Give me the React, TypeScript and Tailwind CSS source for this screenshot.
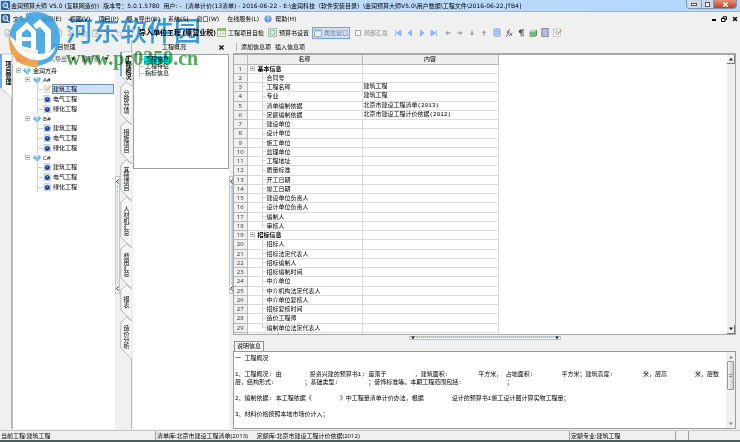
import React from 'react';
import {
  FilePlus, FolderOpen, Save, FilePen, Scissors, Copy, ClipboardPaste, Undo2, Redo2, X,
} from 'lucide-react';

const menus = ['文件(F)', '编辑(E)', '视图(V)', '项目(P)', '导入导出(D)', '系统(S)', '窗口(W)', '在线服务(L)'];

const sections = [
  {
    name: '基本信息',
    rows: [
      ['合同号', ''], ['工程名称', '建筑工程'], ['专业', '建筑工程'],
      ['清单编制依据', '北京市建设工程清单(2013)'], ['定额编制依据', '北京市建设工程计价依据(2012)'],
      ['建设单位', ''], ['设计单位', ''], ['施工单位', ''], ['监理单位', ''], ['工程地址', ''], ['质量标准', ''],
      ['开工日期', ''], ['竣工日期', ''], ['建设单位负责人', ''], ['设计单位负责人', ''], ['编制人', ''], ['审核人', ''],
    ],
  },
  {
    name: '招标信息',
    rows: [
      ['招标人', ''], ['招标法定代表人', ''], ['招标编制人', ''], ['招标编制时间', ''], ['中介单位', ''],
      ['中介机构法定代表人', ''], ['中介单位复核人', ''], ['招标复核时间', ''], ['造价工程师', ''],
      ['编制单位法定代表人', ''],
    ],
  },
  { name: '投标信息', rows: [] },
];

type Row = { name: string; value: string; head: boolean; last: boolean };
const rows: Row[] = sections.flatMap((s) => [
  { name: s.name, value: '', head: true, last: false },
  ...s.rows.map(([name, value], i) => ({ name, value, head: false, last: i === s.rows.length - 1 })),
]);

const tabs = [
  { name: '分部分项', height: 'h-[39px]', edge: 33 },
  { name: '措施项目', height: 'h-[39px]', edge: 33 },
  { name: '其他项目', height: 'h-[37px]', edge: 31 },
  { name: '人材机汇总', height: 'h-[47px]', edge: 41 },
  { name: '费用汇总', height: 'h-[41px]', edge: 35 },
  { name: '报表', height: 'h-[32px]', edge: 26 },
  { name: '造价分析', height: 'h-[38px]', edge: 32 },
];

function AppIcon() {
  return (
    <svg viewBox="0 0 10 10" className="size-[9px] shrink-0">
      <rect width="10" height="10" rx="1" fill="#2a5ea3" />
      <circle cx="4.800" cy="4.600" r="2.600" stroke="#dcecff" strokeWidth="1.200" fill="none" />
      <path d="M6.500 6.500 8.800 9" stroke="#dcecff" strokeWidth="1.300" />
      <path d="M4 5.800V3.800h1.600v2" stroke="#9cc4ee" strokeWidth=".8" fill="none" />
    </svg>
  );
}

function Gem() {
  return (
    <svg viewBox="0 0 8 8" className="size-[8px] shrink-0">
      <path d="M1.500 1.500 5.500 .5 8 3 4.500 7.800 0 3.800z" fill="#5fb0ea" />
      <path d="M1.500 1.500 5.500 .5 6 2.600 2.600 3.600z" fill="#c7ecff" />
      <path d="M2.600 3.600 6 2.600 4.500 7.800z" fill="#8acdf6" />
    </svg>
  );
}

function DocIcon({ editing }: { editing: boolean }) {
  return editing ? (
    <svg viewBox="0 0 8 8" className="size-[8px] shrink-0">
      <path d="M1 1h5.500v6.500H1z" fill="#f3f3f0" stroke="#b9b9b4" strokeWidth=".5" />
      <path d="M3 5.500 7.300 1l.6.6L3.700 6z" fill="#e6a03c" />
      <path d="M2 3h2.500M2 4.500h1.500" stroke="#999" strokeWidth=".5" />
    </svg>
  ) : (
    <svg viewBox="0 0 8 8" className="size-[8px] shrink-0">
      <path d="M1 .3h5l1.500 1.500v6H1z" fill="#dfe6ee" stroke="#9aa7b5" strokeWidth=".5" />
      <circle cx="4.300" cy="4.400" r="2.500" fill="#1b3f9c" />
      <path d="M3 3.500 4.500 3l.6 1-1 .8z" fill="#7fb5f2" />
    </svg>
  );
}

function Minus() {
  return (
    <svg viewBox="0 0 5 5" className="size-[5px] shrink-0">
      <rect x=".5" y=".5" width="4" height="4" fill="#fff" stroke="#c5c5c5" />
      <path d="M1.500 2.500h2" stroke="#555" />
    </svg>
  );
}

function Caret({ dir }: { dir: 'up' | 'down' }) {
  return (
    <svg viewBox="0 0 6 4" className="h-[4px] w-[6px]">
      <path d={dir === 'up' ? 'M1 3.500 3 .8l2 2.700z' : 'M1 .5 3 3.200 5 .5z'} fill="#222" />
    </svg>
  );
}

function NavIcon({ kind }: { kind: 'first' | 'prev' | 'next' | 'last' }) {
  const d = {
    first: 'M1.500 1v6M7 1v6L2.500 4z',
    prev: 'M5.500 1v6L2 4z',
    next: 'M2.500 1v6L6 4z',
    last: 'M6.500 1v6M1 1v6l4.500-3z',
  }[kind];
  return (
    <svg viewBox="0 0 8 8" className="size-[8px]">
      <path d={d} fill="#8fb6f0" stroke="#8fb6f0" strokeWidth=".9" />
    </svg>
  );
}

function SmallArrow({ turn }: { turn: number }) {
  return (
    <svg viewBox="0 0 8 8" className="size-[8px]">
      <path transform={`rotate(${turn} 4 4)`} d="M1.300 4 4 1.800v1.500h2.500v1.400H4v1.500z" fill="#a3a3a3" />
    </svg>
  );
}

function SideCaret() {
  return (
    <svg viewBox="0 0 3 5" className="h-[5px] w-[3px]">
      <path d="M2.600 .5.6 2.500l2 2" stroke="#222" fill="none" />
    </svg>
  );
}

function CollapseBar() {
  return (
    <div className="mt-[121px] flex h-[118px] flex-col items-center justify-between border border-[#c4c4c4] bg-[#f4f4f4] py-[2px]">
      <SideCaret />
      <span className="my-[2px] flex-1 border-l border-dotted border-[#8fb6e6]" />
      <SideCaret />
    </div>
  );
}

function Branch({ name }: { name: string }) {
  const jobs = ['建筑工程', '电气工程', '绿化工程'];
  return (
    <li>
      <div className="flex h-[9px] items-center gap-[2px] pl-[12px]">
        <Minus />
        <span className="ml-px flex items-center gap-[2px]"><Gem />{name}</span>
      </div>
      <ul className="ml-[24px] border-l border-[#d0d0d0]">
        {jobs.map((job, i) => {
          const on = name === 'A#' && i === 0;
          return (
            <li key={job} className="flex h-[10px] items-center">
              <span className="w-[5px] border-t border-[#d0d0d0]" />
              <DocIcon editing={on} />
              <button
                className={
                  on
                    ? 'ml-px h-[10px] flex-1 border border-[#6d8fb8] bg-[#cfe0f7] text-left leading-[8px]'
                    : 'ml-[2px] h-[10px] text-left leading-[10px]'
                }
              >
                {job}
              </button>
            </li>
          );
        })}
      </ul>
    </li>
  );
}

function Gap({ wide = false }: { wide?: boolean }) {
  return <span className={wide ? 'inline-block w-[30px]' : 'inline-block w-[28px]'} />;
}

function Watermark() {
  return (
    <div className="pointer-events-none absolute top-[10px] left-[8px] flex gap-[5px]">
      <svg viewBox="0 0 53 58" className="h-[58px] w-[53px]" opacity=".88">
        <path d="M1 26C4 10 15 2 28 2c15 0 24 12 24 26 0 15-9 26-22 28V40L14 36 2 26z" fill="#3aa3e5" />
        <path d="M1 24c3 9 8 15 19 18v14C8 54-1 42 1 24z" fill="#f29a3c" />
        <path d="M20 44h10v13c-4 0-7 0-10-1z" fill="#f29a3c" />
        <path d="M1 24c5 12 14 19 29 20 8 0 14-3 18-8-4 12-12 15-20 14C14 49 4 38 1 24z" fill="#fff" />
        <path d="M8 22 19 12l9 9v20h-5V23l-4-4-5 4v15l-6-6z" fill="#fff" />
        <path d="M25 15 32 9l11 11v20l-6 4V23l-5-6-4 2z" fill="#fff" />
        <path d="M12 27h13v4H12z" fill="#fff" />
        <circle cx="16" cy="6" r="2" fill="#fff" />
      </svg>
      <div className="flex flex-col pt-px mix-blend-multiply">
        <span className="font-['Noto_Sans_CJK_SC',sans-serif] text-[27px] leading-[37px] font-medium text-[#3ba3ea]">河东软件园</span>
        <span className="font-['Liberation_Serif',serif] text-[20px] leading-[20px] font-bold text-[#4fae56]">www.pc0359.cn</span>
      </div>
    </div>
  );
}

export default function App() {
  return (
    <div className="relative flex h-screen w-full flex-col overflow-hidden bg-[#f0f0f0] font-['Open_Sans','Noto_Sans_CJK_SC',sans-serif] text-[6px] leading-[8px] whitespace-nowrap text-black">
      <header className="flex h-[12px] shrink-0 items-center border-b border-[#9db4cc] bg-linear-to-r from-[#c6dbf1] to-[#b2d8fd] pl-px font-['DejaVu_Sans','Noto_Sans_CJK_SC',sans-serif]">
        <AppIcon />
        <h1 className="ml-px flex flex-1 gap-[4px]">
          <span>金润预算大师 V5.0 (互联网造价)</span>
          <span>版本号：5.0.1.5780</span>
          <span>用户: -</span>
          <span>[清单计价(13清单) - 2016-06-22 - E:\金润科技（软件安装目录）\金润预算大师V5.0\用户数据\工程文件\2016-06-22.JTB4]</span>
        </h1>
        <div className="mr-[3px] flex h-[9px] self-start overflow-hidden rounded-b-sm border border-t-0 border-[#7f93a8]">
          <button aria-label="最小化" className="flex w-[15px] items-center justify-center border-r border-[#8b9db0] bg-[#c9d9ea]">
            <span className="h-[3px] w-[6px] border border-[#555] bg-white" />
          </button>
          <button aria-label="还原" className="flex w-[12px] items-center justify-center border-r border-[#8b9db0] bg-[#c9d9ea]">
            <span className="size-[5px] border border-[#555] bg-white" />
          </button>
          <button aria-label="关闭" className="flex w-[22px] items-center justify-center bg-linear-to-b from-[#e2907c] to-[#c43c20] text-white">
            <X className="size-[7px]" strokeWidth={5} />
          </button>
        </div>
      </header>

      <nav className="flex h-[13px] shrink-0 items-center gap-[8px] pr-[2px] pl-px font-['DejaVu_Sans','Noto_Sans_CJK_SC',sans-serif]">
        <span className="-mr-[5px]"><AppIcon /></span>
        {menus.map((m) => <button key={m}>{m}</button>)}
        <button className="-ml-[3px] flex items-center gap-[3px]">
          <svg viewBox="0 0 8 8" className="size-[8px]">
            <circle cx="4" cy="4" r="3.600" fill="#5b9be6" />
            <path d="M2.800 3.200c0-2 2.600-1.800 2.400-.2C5.100 4 4 4 4 5M4 5.600v.8" stroke="#fff" strokeWidth=".8" fill="none" />
          </svg>
          帮助(H)
        </button>
        <span className="flex-1" />
        <button aria-label="最小化文档" className="mt-[3px] h-[2px] w-[4px] bg-black" />
        <button aria-label="还原文档" className="-mx-[3px]">
          <svg viewBox="0 0 6 6" className="size-[6px]"><path d="M2 2V.8h3.500v2.700H4M.5 2.500H4v3H.5z" fill="none" stroke="#000" /></svg>
        </button>
        <button aria-label="关闭文档"><X className="size-[6px]" strokeWidth={6} /></button>
      </nav>

      <div className="flex h-[15px] shrink-0 items-center">
        <div className="flex w-[139px] shrink-0 items-center gap-[4px] pl-[4px] text-[#9aa8ba]">
          <button aria-label="新建"><FilePlus className="size-[8px]" /></button>
          <span className="w-[8px]" />
          <button aria-label="打开" className="text-[#55a06a]"><FolderOpen className="size-[9px]" /></button>
          <button aria-label="保存" className="text-[#9a9ede]"><Save className="size-[9px]" /></button>
          <button aria-label="编辑" className="text-[#d9aa6a]"><FilePen className="size-[9px]" /></button>
          <button aria-label="剪切"><Scissors className="size-[8px]" /></button>
          <button aria-label="复制"><Copy className="size-[8px]" /></button>
          <button aria-label="粘贴"><ClipboardPaste className="size-[8px]" /></button>
          <button aria-label="删除"><X className="size-[8px]" /></button>
          <button aria-label="撤销"><Undo2 className="size-[8px]" /></button>
          <button aria-label="重做"><Redo2 className="size-[8px]" /></button>
        </div>
        <button className="w-[78px] text-left text-[7px] font-bold">导入单位工程 (原营业税)</button>
        <button className="flex w-[51px] items-center gap-[2px]">
          <svg viewBox="0 0 9 9" className="size-[9px]">
            <path d="M.5.5h8v8h-8z" fill="#fff" stroke="#9ab88e" />
            <path d="M0 0h9v3H0z" fill="#8cc46a" /><path d="M.5 5.500h8M3.500 3v6M6 3v6" stroke="#b2cda8" strokeWidth=".7" />
          </svg>
          工程项目自检
        </button>
        <button className="flex w-[44px] items-center gap-[2px]">
          <svg viewBox="0 0 9 9" className="size-[9px]">
            <rect x=".5" y=".5" width="8" height="8" fill="#d8eedb" stroke="#9fc4a6" />
            <circle cx="4.500" cy="4.500" r="2.400" fill="#f4faff" stroke="#78b98a" />
          </svg>
          预算书设置
        </button>
        <button className="flex h-[12px] w-[38px] items-center gap-[2px] border border-[#6ba6e8] bg-[#cde0f5] pl-px text-[#7a8288]">
          <svg viewBox="0 0 8 8" className="size-[8px]">
            <path d="M.5 1h7v6.500h-7z" fill="#e9eef4" stroke="#9aa8b6" /><path d="M0 .5h8v2H0z" fill="#a9b7c6" />
          </svg>
          属性窗口
        </button>
        <label className="ml-[5px] flex items-center gap-[3px] text-[#8a8a8a]">
          <input type="checkbox" className="size-[6px] appearance-none border border-[#aaa] bg-[#f8f8f8]" />
          局部汇总
        </label>
        <div className="ml-[6px] flex items-center gap-[4px]">
          <button aria-label="首条"><NavIcon kind="first" /></button>
          <button aria-label="上一条"><NavIcon kind="prev" /></button>
          <button aria-label="下一条"><NavIcon kind="next" /></button>
          <button aria-label="末条"><NavIcon kind="last" /></button>
          <button aria-label="左移" className="ml-[2px]"><SmallArrow turn={0} /></button>
          <button aria-label="右移"><SmallArrow turn={180} /></button>
          <button aria-label="下移"><SmallArrow turn={270} /></button>
          <button aria-label="上移"><SmallArrow turn={90} /></button>
          <button aria-label="数据库" className="ml-px">
            <svg viewBox="0 0 8 9" className="h-[9px] w-[8px]">
              <rect x=".8" y=".5" width="6.400" height="8" rx="1.500" fill="#b4ccf2" stroke="#8ba8da" strokeWidth=".7" />
              <path d="M1 3.200h6M1 5.800h6" stroke="#8ba8da" strokeWidth=".6" />
            </svg>
          </button>
          <button aria-label="函数">
            <svg viewBox="0 0 8 8" className="size-[8px]">
              <path d="M5 .8C3.400.5 3.300 2 3 4c-.3 2-.5 3.400-2 3.200M1.800 3h2.800M4.500 4l2.500 3M7.300 4 4 7" fill="none" stroke="#555" strokeWidth=".9" />
            </svg>
          </button>
          <button aria-label="段落">
            <svg viewBox="0 0 8 8" className="size-[8px]">
              <path d="M4 .8h3M4.200 1v6.500M6 1v6.500" stroke="#444" strokeWidth=".8" /><path d="M4.200.5C1 .5 1 4.300 4.200 4.300z" fill="#444" />
            </svg>
          </button>
          <button aria-label="图集">
            <svg viewBox="0 0 8 8" className="size-[8px]">
              <path d="M2 .5h6L6.500 2.500H.5z" fill="#b5e0b6" /><path d="M.5 2.500h6V8h-6z" fill="#74b87a" /><path d="M6.500 2.500 8 .5V6L6.500 8z" fill="#4e8a56" />
            </svg>
          </button>
          <button aria-label="列设置">
            <svg viewBox="0 0 8 9" className="h-[9px] w-[8px]">
              <rect x=".8" y=".5" width="6.400" height="8" fill="#aaaed8" stroke="#7b7f92" strokeWidth=".8" /><path d="M3 1v7M5 1v7" stroke="#d7d9f0" strokeWidth=".7" />
            </svg>
          </button>
          <button aria-label="备注">
            <svg viewBox="0 0 9 9" className="size-[9px]">
              <rect x=".5" y="1" width="7" height="7.500" fill="#fafafa" stroke="#b3b9c0" strokeWidth=".7" />
              <path d="M2 3h3M2 5h2" stroke="#6d8fc0" strokeWidth=".7" /><path d="m3.500 6.500 4.500-5 .8.8-4.300 4.700z" fill="#d58b3a" />
            </svg>
          </button>
        </div>
      </div>

      <main className="flex min-h-0 flex-1 pr-[2px]">
        <div className="w-[12px] shrink-0 border-r border-[#b8b8b8] pt-[14px]">
          <button className="relative flex h-[34px] w-[12px] items-start justify-center pt-[3px] font-bold [writing-mode:vertical-rl]">
            <svg viewBox="0 0 12 46" className="absolute top-0 left-0 h-[46px] w-[12px] overflow-visible">
              <path d="M1 0h11v45L1 34z" fill="#fff" stroke="#b0b0b0" strokeWidth=".7" />
              <path d="M1 0v34" stroke="#4f97e0" strokeWidth="1.500" />
            </svg>
            <span className="relative leading-[9px]">项目管理</span>
          </button>
        </div>

        <section className="flex w-[103px] shrink-0 flex-col">
          <h2 className="h-[14px] text-center leading-[14px]">项目管理</h2>
          <div className="flex h-[10px] shrink-0 items-center gap-[6px] pl-[4px] text-[#555]">
            {['新建', '导入导出', '展开到'].map((t) => (
              <button key={t} className="flex items-center gap-[3px]">{t}<Caret dir="down" /></button>
            ))}
          </div>
          <ul className="flex-1 border-l border-[#b8b8b8] bg-white pt-[2px] pr-px">
            <li>
              <div className="flex h-[9px] items-center gap-[2px] pl-[3px]">
                <Minus />
                <Gem />
                <span>金润方舟</span>
              </div>
              <ul>
                <Branch name="A#" />
                <Branch name="B#" />
                <Branch name="C#" />
              </ul>
            </li>
          </ul>
        </section>

        <div className="flex w-[5px] shrink-0 flex-col pt-[15px]"><CollapseBar /></div>

        <div className="w-[12px] shrink-0 border-r border-[#b8b8b8] pt-[12px]">
          <button className="relative flex h-[29px] w-[12px] items-start justify-center pt-[3px] font-bold [writing-mode:vertical-rl]">
            <svg viewBox="0 0 12 36" className="absolute top-0 left-0 h-[36px] w-[12px] overflow-visible">
              <path d="M1 0h11v35L1 24z" fill="#fff" stroke="#b0b0b0" strokeWidth=".7" />
              <path d="M1 0v24" stroke="#4f97e0" strokeWidth="1.500" />
            </svg>
            <span className="relative leading-[8px]">工程概况</span>
          </button>
          {tabs.map((t) => (
            <button key={t.name} className={`relative flex w-[12px] items-center justify-center pt-[3px] [writing-mode:vertical-rl] ${t.height}`}>
              <svg viewBox={`0 0 12 ${t.edge + 6}`} className="absolute inset-0 h-full w-full overflow-visible">
                <path d={`M12 5 6.500 1 .8 6v${t.edge - 6}l11 11`} fill="#f6f6f6" stroke="#a8a8a8" strokeWidth=".8" />
              </svg>
              <span className="relative leading-[8px]">{t.name}</span>
            </button>
          ))}
        </div>

        <section className="flex w-[97px] shrink-0 flex-col pl-px">
          <div className="flex h-[14px] shrink-0 items-center justify-end gap-[32px] pr-[4px]">
            <h2>工程概况</h2>
            <button aria-label="关闭面板"><X className="size-[7px]" strokeWidth={4} /></button>
          </div>
          <ul className="h-[115px] shrink-0 border border-[#9a9fa8] bg-white pt-px pl-[5px]">
            {['工程信息', '工程特征', '指标信息'].map((t, i) => (
              <li key={t} className="flex h-[7px] items-center">
                <span className="h-[7px] w-[5px] border-l border-[#c8c8c8]"><span className="mt-[3px] block border-t border-[#c8c8c8]" /></span>
                <button className={i === 0 ? 'bg-[#00e5ee] px-px leading-[7px]' : 'px-px leading-[7px]'}>{t}</button>
              </li>
            ))}
          </ul>
          <div className="flex-1 bg-white" />
        </section>

        <div className="flex w-[4px] shrink-0 flex-col pt-[15px]"><CollapseBar /></div>

        <section className="flex min-w-0 flex-1 flex-col pr-[2px]">
          <div className="flex h-[13px] shrink-0 items-center gap-[4px] pt-px pl-[3px]">
            <span className="h-[8px] border-l border-[#b5b5b5]" />
            <button>添加信息项</button>
            <button>插入信息项</button>
          </div>
          <div className="flex min-h-0 flex-1 border border-t-2 border-[#a9a9a9] bg-white">
            <div className="min-w-0 flex-1 overflow-hidden">
              <table className="w-[264px] table-fixed border-collapse leading-[8px]">
                <colgroup><col className="w-[13px]" /><col className="w-[115px]" /><col className="w-[136px]" /></colgroup>
                <thead>
                  <tr className="h-[9px] bg-[#efefef]">
                    <th className="border-r border-b border-[#b8b8b8] p-0" />
                    <th className="border-r border-b border-[#b8b8b8] p-0 font-normal">名称</th>
                    <th className="border-r border-b border-[#b8b8b8] p-0 font-normal">内容</th>
                  </tr>
                </thead>
                <tbody>
                  {rows.map((r, i) => (
                    <tr key={i} className={i % 4 === 3 ? 'h-[10px]' : 'h-[9px]'}>
                      <td className="border-r border-b border-[#b8b8b8] bg-[#f0f0f0] p-0 text-center text-[#333]">{i + 1}</td>
                      <td className="border-r border-b border-[#dcdcdc] p-0">
                        {r.head ? (
                          <span className="flex h-[8px] items-center gap-[3px] pl-[2px] font-bold"><Minus />{r.name}</span>
                        ) : (
                          <span className="flex h-[8px] items-center pl-[14px]">
                            <span className={r.last ? 'h-[5px] self-start border-l border-[#d5d5d5]' : 'h-[8px] border-l border-[#d5d5d5]'} />
                            <span className="mr-px w-[3px] border-t border-[#d5d5d5]" />
                            {r.name}
                          </span>
                        )}
                      </td>
                      <td className="border-r border-b border-[#dcdcdc] py-0 pr-0 pl-px font-['Liberation_Mono','Noto_Sans_CJK_SC',monospace]">{r.value}</td>
                    </tr>
                  ))}
                </tbody>
              </table>
            </div>
            <div className="flex w-[8px] shrink-0 flex-col justify-between bg-[#efefef]">
              <button aria-label="向上滚动" className="flex h-[9px] items-center justify-center border-r border-b border-[#777]"><Caret dir="up" /></button>
              <button aria-label="向下滚动" className="flex h-[9px] items-center justify-center border-r border-b border-[#777]"><Caret dir="down" /></button>
            </div>
          </div>
          <div className="flex h-[5px] shrink-0 items-center justify-center">
            <div className="flex h-[4px] w-[152px] items-center justify-between border border-[#c0c0c0] bg-[#f6f6f6]">
              <Caret dir="down" />
              <span className="flex-1 border-t border-dotted border-[#8fb6e6]" />
              <Caret dir="down" />
            </div>
          </div>
          <div className="flex h-[11px] shrink-0 items-end pl-px">
            <button className="h-[10px] border border-b-0 border-[#8f8f8f] bg-[#f7f7f7] px-[2px] leading-[9px]">说明信息</button>
          </div>
          <div className="flex h-[78px] shrink-0 border border-[#9b9b9b] bg-white">
            <div className="min-w-0 flex-1 overflow-hidden pt-[3px] pl-px font-['Liberation_Mono','Noto_Sans_CJK_SC',monospace]">
              <p>一 工程概况</p>
              <p className="mt-[8px]">
                1、工程概况: 由<Gap />投资兴建的预算书1; 座落于<Gap />，建筑面积:<Gap wide />平方米， 占地面积:<Gap />平方米；建筑高度:<Gap wide />米，层高<Gap />米，层数
              </p>
              <p>
                层，结构形式:<Gap wide />；基础类型:<Gap wide />；装饰标准等。本期工程范围包括:<Gap wide /><span className="pl-[15px]">；</span>
              </p>
              <p className="mt-[8px]">
                2、编制依据: 本工程依据《<Gap />》中工程量清单计价办法，根据<Gap />设计的预算书1施工设计图计算实物工程量；
              </p>
              <p className="mt-[8px]">3、材料价格按照本地市场价计入；</p>
            </div>
            <div className="flex w-[9px] shrink-0 flex-col items-center bg-[#f1f1f1]">
              <button aria-label="说明向上滚动" className="flex h-[9px] items-center opacity-50"><Caret dir="up" /></button>
              <span className="flex h-[29px] w-[7px] flex-col items-center justify-center gap-px rounded-[1px] border border-[#999] bg-linear-to-r from-[#f3f3f3] to-[#cfcfcf]">
                <span className="w-[3px] border-t border-[#888]" />
                <span className="w-[3px] border-t border-[#888]" />
              </span>
              <span className="flex-1" />
              <button aria-label="说明向下滚动" className="flex h-[9px] items-center opacity-50"><Caret dir="down" /></button>
            </div>
          </div>
        </section>
      </main>

      <footer className="mt-px flex h-[12px] shrink-0 border-t border-b-2 border-t-[#c6c6c6] border-b-[#4f5a60] leading-[10px]">
        <div className="w-[155px] shrink-0 pl-px">当前工程:建筑工程</div>
        <div className="flex flex-1 gap-[9px] border-l border-[#9d9d9d] pl-px">
          <span>清单库:北京市建设工程清单(2013)</span>
          <span>定额库:北京市建设工程计价依据(2012)</span>
        </div>
        <div className="w-[106px] border-l border-[#9d9d9d] pl-px">定额专业:建筑工程</div>
        <div className="w-[13px] border-l border-[#9d9d9d]" />
        <div className="w-[52px] border-l border-[#9d9d9d]" />
      </footer>

      <Watermark />
    </div>
  );
}
